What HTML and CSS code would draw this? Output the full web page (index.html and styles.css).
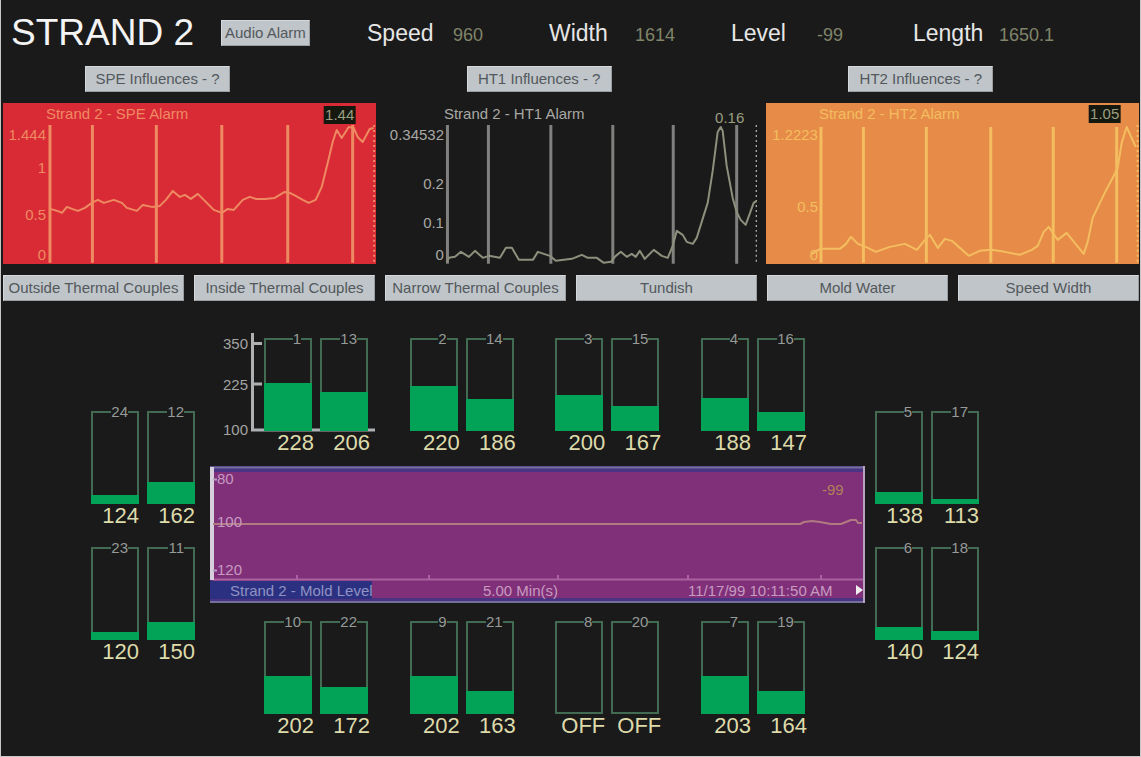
FILE: index.html
```html
<!DOCTYPE html>
<html lang="en">
<head>
<meta charset="utf-8">
<title>Strand 2</title>
<link rel="stylesheet" href="styles.css">
</head>
<body>
<header class="top">
  <div class="brand">
    <h1>STRAND 2</h1>
    <button class="btn" type="button">Audio Alarm</button>
  </div>
  <dl class="stat"><dt>Speed</dt><dd>960</dd></dl>
  <dl class="stat"><dt>Width</dt><dd>1614</dd></dl>
  <dl class="stat"><dt>Level</dt><dd>-99</dd></dl>
  <dl class="stat"><dt>Length</dt><dd>1650.1</dd></dl>
</header>

<main>
<section class="alarms">
  <article class="alarm">
    <button class="btn influence" type="button">SPE Influences - ?</button>
    <svg class="trend spe" viewBox="3 103 373 161" role="img" aria-label="Strand 2 - SPE Alarm">
      <path class="grid-line" d="M50 125V263M92.500 125V263M156.500 125V263M222 125V263M288 125V263M353 125V263"/>
      <path class="edge" d="M374.500 125V263"/>
      <polyline class="curve" points="50,209 54,210 60,212 62,213 67,207 72,209 78,211 85,208 92,203 98,200 104,203 114,200 122,203 127,208 137,211 143,205 152,207 160,206 166,200 173,191 180,197 185,195 191,199 198,194 207,203 214,210 222,213 228,209 234,210 243,200 250,197 256,199 265,199 275,198 285,192 290,193 296,196 303,200 309,203 316,200 322,187 328,163 333,142 337,130 342,138 349,127 354,128 358,137 363,142 370,129 374,128"/>
      <text x="46" y="119">Strand 2 - SPE Alarm</text>
      <g text-anchor="end"><text x="46" y="140">1.444</text><text x="46" y="173">1</text><text x="46" y="220">0.5</text><text x="46" y="260">0</text></g>
      <rect class="badge" x="324" y="106" width="32" height="18"/>
      <text class="now" x="340" y="120" text-anchor="middle">1.44</text>
    </svg>
  </article>
  <article class="alarm">
    <button class="btn influence" type="button">HT1 Influences - ?</button>
    <svg class="trend ht1" viewBox="385 103 373 161" role="img" aria-label="Strand 2 - HT1 Alarm">
      <path class="grid-line" d="M447.500 125V264M488.500 125V264M551 125V264M613 125V264M673.500 125V264M737 125V264"/>
      <path class="edge" d="M757 125V264"/>
      <polyline class="curve" points="447,262 449,258 455,257 461,252 469,257 475,251 483,258 489,256 500,258 506,248 512,248 519,260 533,260 538,252 550,256 556,261 572,259 582,255 588,258 597,258 604,263 611,262 616,256 621,252 627,257 632,254 636,257 640,251 645,259 654,250 662,256 668,258 673,246 677,231 683,235 687,242 693,244 697,238 702,222 708,203 713,171 718,132 721,127 723,131 727,166 733,198 737,212 741,220 746,225 750,214 754,203 757,201"/>
      <text x="444" y="119">Strand 2 - HT1 Alarm</text>
      <g text-anchor="end"><text x="444" y="140">0.34532</text><text x="444" y="189">0.2</text><text x="444" y="228">0.1</text><text x="444" y="260">0</text></g>
      <text class="now" x="730" y="123" text-anchor="middle">0.16</text>
    </svg>
  </article>
  <article class="alarm">
    <button class="btn influence" type="button">HT2 Influences - ?</button>
    <svg class="trend ht2" viewBox="766 103 373 161" role="img" aria-label="Strand 2 - HT2 Alarm">
      <path class="grid-line" d="M821 127V263M863.500 127V263M926.500 127V263M991 127V263M1053.500 127V263M1117 127V263"/>
      <path class="edge" d="M1138 125V263"/>
      <polyline class="curve" points="812,254 820,249 840,249 846,244 851,237 858,244 868,248 876,252 890,247 905,244 917,250 926,239 930,235 938,248 945,239 952,241 969,256 980,251 992,250 1005,252 1020,255 1032,250 1038,246 1044,232 1049,227 1058,240 1067,233 1075,243 1084,254 1088,242 1093,218 1106,191 1114,176 1118,168 1122,143 1127,127 1132,138 1136,147"/>
      <text x="819" y="119">Strand 2 - HT2 Alarm</text>
      <g text-anchor="end"><text x="818" y="140">1.2223</text><text x="818" y="212">0.5</text><text x="818" y="260">0</text></g>
      <rect class="badge" x="1089" y="105" width="32" height="18"/>
      <text class="now" x="1105" y="119" text-anchor="middle">1.05</text>
    </svg>
  </article>
</section>

<nav class="tabs">
  <button class="btn" type="button">Outside Thermal Couples</button>
  <button class="btn" type="button">Inside Thermal Couples</button>
  <button class="btn" type="button">Narrow Thermal Couples</button>
  <button class="btn" type="button">Tundish</button>
  <button class="btn" type="button">Mold Water</button>
  <button class="btn" type="button">Speed Width</button>
</nav>

<section class="mold">
  <div class="side">
    <div class="pair">
      <div class="gauge"><div class="tube"><b>24</b><i style="height:10%"></i></div><span>124</span></div>
      <div class="gauge"><div class="tube"><b>12</b><i style="height:24%"></i></div><span>162</span></div>
    </div>
    <div class="pair">
      <div class="gauge"><div class="tube"><b>23</b><i style="height:8%"></i></div><span>120</span></div>
      <div class="gauge"><div class="tube"><b>11</b><i style="height:19%"></i></div><span>150</span></div>
    </div>
  </div>

  <div class="center">
    <div class="row">
      <div class="pair">
        <svg class="axis" viewBox="220 331 156 106" aria-label="Scale 100 to 350">
          <path d="M252.500 333V431M251 430H375M252 343.500H262M252 384H262"/>
          <g text-anchor="end"><text x="248" y="349">350</text><text x="248" y="390">225</text><text x="248" y="435">100</text></g>
        </svg>
        <div class="gauge"><div class="tube"><b>1</b><i style="height:51%"></i></div><span>228</span></div>
        <div class="gauge"><div class="tube"><b>13</b><i style="height:42%"></i></div><span>206</span></div>
      </div>
      <div class="pair">
        <div class="gauge"><div class="tube"><b>2</b><i style="height:48%"></i></div><span>220</span></div>
        <div class="gauge"><div class="tube"><b>14</b><i style="height:34%"></i></div><span>186</span></div>
      </div>
      <div class="pair">
        <div class="gauge"><div class="tube"><b>3</b><i style="height:39%"></i></div><span>200</span></div>
        <div class="gauge"><div class="tube"><b>15</b><i style="height:27%"></i></div><span>167</span></div>
      </div>
      <div class="pair">
        <div class="gauge"><div class="tube"><b>4</b><i style="height:35%"></i></div><span>188</span></div>
        <div class="gauge"><div class="tube"><b>16</b><i style="height:20%"></i></div><span>147</span></div>
      </div>
    </div>

    <svg class="level" viewBox="210 466 655 137" role="img" aria-label="Strand 2 - Mold Level">
      <rect class="band" x="210" y="466" width="655" height="137"/>
      <rect class="body" x="213" y="472" width="650" height="126"/>
      <rect class="tag" x="210" y="581" width="162" height="18"/>
      <path class="rim" d="M210 467.500H865M210 602H865"/>
      <path class="base" d="M213 579.500H864M297 575V579M429 575V579M558 575V579M688 575V579M821 575V579"/>
      <path class="wall" d="M212 467V580"/>
      <path class="wall thin" d="M864 466V603M213 479.500H217M213 570.500H217"/>
      <polyline class="curve" points="213,524 800,524 804,522 812,521 820,522 831,524 841,524 851,520 856,520 858,523 862,523"/>
      <text x="217" y="484">80</text><text x="217" y="527">100</text><text x="217" y="575">120</text>
      <text class="reading" x="822" y="495">-99</text>
      <text x="230" y="596" class="name">Strand 2 - Mold Level</text>
      <text x="483" y="596">5.00 Min(s)</text>
      <text x="688" y="596">11/17/99 10:11:50 AM</text>
      <path class="arrow" d="M856 585L863 590L856 595Z"/>
    </svg>

    <div class="row">
      <div class="pair">
        <div class="gauge"><div class="tube"><b>10</b><i style="height:41%"></i></div><span>202</span></div>
        <div class="gauge"><div class="tube"><b>22</b><i style="height:29%"></i></div><span>172</span></div>
      </div>
      <div class="pair">
        <div class="gauge"><div class="tube"><b>9</b><i style="height:41%"></i></div><span>202</span></div>
        <div class="gauge"><div class="tube"><b>21</b><i style="height:25%"></i></div><span>163</span></div>
      </div>
      <div class="pair">
        <div class="gauge"><div class="tube"><b>8</b></div><span>OFF</span></div>
        <div class="gauge"><div class="tube"><b>20</b></div><span>OFF</span></div>
      </div>
      <div class="pair">
        <div class="gauge"><div class="tube"><b>7</b><i style="height:41%"></i></div><span>203</span></div>
        <div class="gauge"><div class="tube"><b>19</b><i style="height:25%"></i></div><span>164</span></div>
      </div>
    </div>
  </div>

  <div class="side">
    <div class="pair">
      <div class="gauge"><div class="tube"><b>5</b><i style="height:13%"></i></div><span>138</span></div>
      <div class="gauge"><div class="tube"><b>17</b><i style="height:5%"></i></div><span>113</span></div>
    </div>
    <div class="pair">
      <div class="gauge"><div class="tube"><b>6</b><i style="height:14%"></i></div><span>140</span></div>
      <div class="gauge"><div class="tube"><b>18</b><i style="height:9%"></i></div><span>124</span></div>
    </div>
  </div>
</section>
</main>
</body>
</html>
```
FILE: styles.css
```css
* { box-sizing: border-box; }

body {
  margin: 0;
  min-height: 100vh;
  border: 1px solid #c8c8c8;
  border-top: 0;
  background: #1a1a1a;
  color: #b4b4b0;
  font-family: "Liberation Sans", Arial, sans-serif;
  font-size: 15px;
}

.top {
  display: grid;
  grid-template-columns: 356fr repeat(4, 182fr);
  align-items: center;
  padding: 11px 45px 11px 10px;
}
.brand { display: flex; align-items: center; gap: 27px; }
h1 {
  margin: 0;
  color: #f4f4f4;
  font-size: 37px;
  font-weight: 400;
  line-height: 44px;
  white-space: nowrap;
}
.stat {
  display: grid;
  grid-template-columns: 86px 1fr;
  align-items: baseline;
  margin: 0;
}
.stat dt { color: #e6e6e6; font-size: 23px; }
.stat dd { margin: 0; color: #80846a; font-size: 18px; }

.btn {
  height: 26px;
  padding: 0 3px;
  border: 1px solid #d4d8da;
  border-right-color: #9a9ea0;
  border-bottom-color: #9a9ea0;
  border-radius: 0;
  background: #bfc5c9;
  color: #53585c;
  font: inherit;
  line-height: 24px;
  white-space: nowrap;
}

.alarms {
  display: grid;
  grid-template-columns: repeat(3, 1fr);
  gap: 9px;
  padding: 0 1px 0 2px;
}
.influence { display: block; width: 145px; margin: 0 0 11px 82px; }
.trend { display: block; width: 100%; height: auto; }
.trend text { fill: currentColor; }
.grid-line { fill: none; stroke: currentColor; stroke-width: 3; }
.edge { fill: none; stroke: currentColor; stroke-width: 2; stroke-dasharray: 2 3; }
.curve { fill: none; stroke: currentColor; stroke-width: 2; stroke-linejoin: round; }
.badge { fill: #14180f; }
.trend .now { fill: #9b9f80; }
.spe { background: #d92b35; color: #ee8a62; }
.ht1 { color: #a8a8a4; }
.ht1 .grid-line { stroke: #80807e; }
.ht1 .curve { stroke: #8e8f7c; }
.ht2 { background: #e68c48; color: #f4bd60; }

.tabs {
  display: grid;
  grid-template-columns: repeat(6, minmax(0, 1fr));
  gap: 10px;
  padding: 11px 1px 0 2px;
}

.mold {
  display: grid;
  grid-template-columns: 104px 1fr 104px;
  padding: 37px 161px 18px 90px;
}
.side { display: grid; align-content: start; gap: 19px; padding-top: 73px; }
.center { margin: 0 10px 0 15px; }
.row { display: flex; justify-content: space-between; padding: 0 60px 0 54px; }
.pair { position: relative; display: flex; gap: 8px; }
.gauge { width: 48px; }
.tube {
  position: relative;
  display: flex;
  align-items: flex-end;
  height: 93px;
  box-shadow: inset 0 0 0 2px #416b52;
}
.tube i { width: 100%; background: #02a357; }
.tube b {
  position: absolute;
  top: -8px;
  right: 11px;
  background: #1a1a1a;
  color: #969a98;
  font-weight: 400;
  line-height: 17px;
}
.gauge span {
  display: flex;
  justify-content: flex-end;
  margin-right: -2px;
  color: #dedbab;
  font-size: 22px;
  line-height: 24px;
}
.side .gauge span { margin-right: 0; }

.axis { position: absolute; top: -7px; left: -44px; width: 156px; height: 106px; }
.axis path { fill: none; stroke: #aeb0b2; stroke-width: 3; }
.axis text { fill: #a2a4a2; }

.level { display: block; width: 100%; height: auto; margin: 11px 0 18px; }
.level text { fill: #c79ac0; }
.level .name { fill: #8f93c4; }
.level .reading { fill: #b0805a; }
.band { fill: #4a3382; }
.body { fill: #7f3079; }
.tag { fill: #2c3080; }
.rim { stroke: #74709c; stroke-width: 2; }
.base { fill: none; stroke: #a9629f; stroke-width: 2; }
.wall { fill: none; stroke: #d8cfdc; stroke-width: 4; }
.wall.thin { stroke: #b7a3c0; stroke-width: 2; }
.level .curve { stroke: #b17a80; }
.arrow { fill: #f0eef0; }
```
